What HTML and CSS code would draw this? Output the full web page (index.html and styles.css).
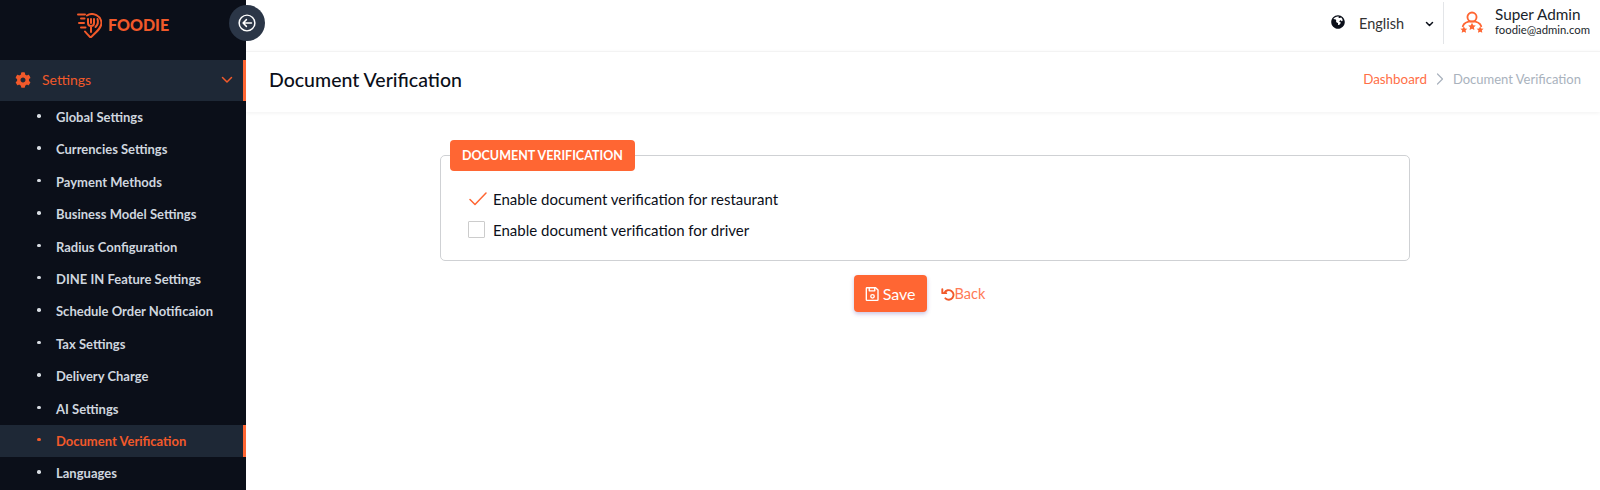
FILE: index.html
```html
<!DOCTYPE html>
<html lang="en">
<head>
    <meta charset="UTF-8">
    <meta name="viewport" content="width=device-width, initial-scale=1.0">
    <title>Document Verification</title>
    <link rel="stylesheet" href="styles.css">
</head>
<body>
    <div class="app">
        <!-- Sidebar -->
        <aside class="sidebar">
            <div class="brand">
                <svg class="brand-icon" viewBox="0 0 25 25" fill="none" stroke="#f1592a" stroke-width="2" stroke-linecap="round" stroke-linejoin="round">
                    <path d="M1 1.500h7M4 5.500h3.500M2 10h5M4 14.500h4.500"/>
                    <path d="M10 2.500A9.500 9.500 0 0 1 24.500 10c0 5-5 9-11 14.500-2-2-4-4-5.500-6"/>
                    <path d="M11 6v4c0 2 1 3 3 3v6M17 6v4c0 2-1 3-3 3M14 6v4"/>
                    <path d="M20.500 6c1 3 0 6-2 8"/>
                </svg>
                <span class="brand-name">FOODIE</span>
            </div>
            <button class="collapse-btn" aria-label="Collapse">
                <svg viewBox="0 0 16 16" fill="none" stroke="#fff" stroke-width="1.300" stroke-linecap="round" stroke-linejoin="round">
                    <circle cx="8" cy="8" r="7"/>
                    <path d="M12 8H4.500M7.500 5L4.500 8l3 3"/>
                </svg>
            </button>
            <nav class="menu">
                <div class="menu-parent">
                    <svg class="gear" viewBox="0 0 512 512" fill="#f1592a"><path d="M487 316l-42-25c4-23 4-47 0-70l42-25c5-3 7-9 5-14-11-35-30-67-54-93-4-4-10-5-15-2l-42 24c-18-15-38-27-60-35V28c0-6-4-11-9-12-37-8-74-8-109 0-6 1-10 6-10 12v48c-22 8-42 20-60 35L91 87c-5-3-11-2-15 2-24 26-43 58-54 93-2 5 0 11 5 14l42 25c-4 23-4 47 0 70l-42 25c-5 3-7 9-5 14 11 35 30 67 54 93 4 4 10 5 15 2l42-24c18 15 38 27 60 35v48c0 6 4 11 10 12 37 8 74 8 109 0 5-1 9-6 9-12v-48c22-8 42-20 60-35l42 24c5 3 11 2 15-2 24-26 43-58 54-93 2-5 0-11-5-14zM256 336c-44 0-80-36-80-80s36-80 80-80 80 36 80 80-36 80-80 80z"/></svg>
                    <span class="menu-label">Settings</span>
                    <svg class="chev" viewBox="0 0 12 8" fill="none" stroke="#f1592a" stroke-width="1.500" stroke-linecap="round" stroke-linejoin="round"><path d="M1.500 1.500L6 6l4.500-4.500"/></svg>
                </div>
                <ul class="submenu">
                    <li>Global Settings</li>
                    <li>Currencies Settings</li>
                    <li>Payment Methods</li>
                    <li>Business Model Settings</li>
                    <li>Radius Configuration</li>
                    <li>DINE IN Feature Settings</li>
                    <li>Schedule Order Notificaion</li>
                    <li>Tax Settings</li>
                    <li>Delivery Charge</li>
                    <li>AI Settings</li>
                    <li class="active">Document Verification</li>
                    <li>Languages</li>
                </ul>
            </nav>
        </aside>

        <div class="main">
            <!-- Top bar -->
            <header class="topbar">
                <svg class="globe" viewBox="0 0 512 512" fill="#0b0f19"><path d="M256 8C119 8 8 119 8 256s111 248 248 248 248-111 248-248S393 8 256 8zm160 215c-12 5-26 1-36-8l-24-20c-8-7-20-5-26 4l-22 33c-6 9-2 21 8 25l28 11c12 5 16 20 8 30l-46 58c-6 8-16 13-26 13h-6c-14 0-24-13-21-27l6-28c2-8-2-16-9-20l-39-22c-20-11-30-34-25-56l3-14c3-13-3-26-15-33L86 150C122 94 185 56 256 56c11 0 22 1 32 3l-12 18c-6 9-2 21 8 25l26 9c14 5 29 1 39-10l14-15c32 25 55 60 63 101z"/></svg>
                <span class="lang">English</span>
                <svg class="lang-chev" viewBox="0 0 12 8" fill="none" stroke="#0b0f19" stroke-width="2" stroke-linecap="round" stroke-linejoin="round"><path d="M2 2l4 4 4-4"/></svg>
                <div class="user">
                    <svg class="user-icon" viewBox="0 0 24 24" fill="none" stroke="#ff6633" stroke-width="1.700" stroke-linecap="round" stroke-linejoin="round">
                        <circle cx="12" cy="6.500" r="4.200"/>
                        <path d="M3.500 15c1-3 4-4.500 8.500-4.500s7.500 1.500 8.500 4.500"/>
                        <path fill="#ff6633" stroke="none" d="M12 11.800l1.100 2.200 2.400.3-1.700 1.700.4 2.400-2.200-1.100-2.200 1.100.4-2.400-1.700-1.700 2.400-.3zM4.500 15l1 2 2.200.3-1.600 1.500.4 2.200-2-1-2 1 .4-2.200-1.600-1.500 2.200-.3zM19.500 15l1 2 2.200.3-1.600 1.500.4 2.200-2-1-2 1 .4-2.200-1.600-1.500 2.200-.3z"/>
                    </svg>
                    <div class="user-info">
                        <div class="user-name">Super Admin</div>
                        <div class="user-mail">foodie@admin.com</div>
                    </div>
                </div>
            </header>

            <!-- Page title -->
            <div class="page-head">
                <h1>Document Verification</h1>
                <div class="crumbs">
                    <span class="crumb-link">Dashboard</span>
                    <svg class="crumb-sep" viewBox="0 0 8 12" fill="none" stroke="#a9b2bd" stroke-width="1.200" stroke-linecap="round" stroke-linejoin="round"><path d="M1.500 1L6.500 6l-5 5"/></svg>
                    <span class="crumb-current">Document Verification</span>
                </div>
            </div>

            <!-- Form -->
            <div class="content">
                <fieldset class="card">
                    <legend>DOCUMENT VERIFICATION</legend>
                    <label class="check-row">
                        <svg class="tick" viewBox="0 0 18 14" fill="none" stroke="#ff6633" stroke-width="1.500" stroke-linecap="round" stroke-linejoin="round"><path d="M1 7.500L6 12.500 17 1"/></svg>
                        <span>Enable document verification for restaurant</span>
                    </label>
                    <label class="check-row">
                        <span class="box"></span>
                        <span>Enable document verification for driver</span>
                    </label>
                </fieldset>
                <div class="actions">
                    <button class="save-btn">
                        <svg viewBox="0 0 448 512" fill="none" stroke="#fff" stroke-width="44" stroke-linejoin="round"><path d="M48 54h276l76 76v306a22 22 0 0 1-22 22H48a22 22 0 0 1-22-22V76a22 22 0 0 1 22-22z"/><path d="M120 54v100h176V54"/><circle cx="224" cy="330" r="56"/></svg>
                        Save
                    </button>
                    <span class="back-link">
                        <svg viewBox="0 0 16 16" fill="none" stroke="#f1592a" stroke-width="2.200" stroke-linecap="round" stroke-linejoin="round"><path d="M4 6.500A5.500 5.500 0 1 1 5 13"/><path d="M1.500 2.500v4.500H6"/></svg>
                        Back
                    </span>
                </div>
            </div>
        </div>
    </div>
</body>
</html>
```

FILE: styles.css
```css
/* General Styles */
body {
    margin: 0;
    font-family: "Lato", "Liberation Sans", sans-serif;
    color: #0b0f19;
    background: #fff;
}

.app {
    display: flex;
    height: 490px;
    overflow: hidden;
}

/* Sidebar */
.sidebar {
    position: relative;
    width: 246px;
    flex-shrink: 0;
    background: #0b0f19;
}

.brand {
    height: 60px;
    padding: 13px 0 0 77px;
    box-sizing: border-box;
    display: flex;
    align-items: flex-start;
    gap: 6px;
}

.brand-icon {
    width: 25px;
    height: 25px;
}

.brand-name {
    color: #f1592a;
    font-size: 16px;
    font-weight: 900;
    line-height: 24px;
}

.collapse-btn {
    position: absolute;
    top: 5px;
    left: 229px;
    width: 36px;
    height: 36px;
    padding: 9px;
    border: none;
    border-radius: 50%;
    background: #2b3647;
    z-index: 5;
}

.collapse-btn svg {
    display: block;
    width: 18px;
    height: 18px;
}

.menu-parent {
    display: flex;
    align-items: center;
    height: 41px;
    padding: 0 10px 2px 15px;
    box-sizing: border-box;
    background: #1e2836;
    border-right: 3px solid #ff6633;
    color: #f1592a;
    font-size: 14px;
}

.gear {
    width: 16px;
    height: 16px;
    margin-right: 11px;
}

.menu-label {
    flex: 1;
}

.chev {
    width: 12px;
    height: 8px;
}

.submenu {
    list-style: none;
    margin: 0;
    padding: 0;
}

.submenu li {
    position: relative;
    height: 32.400px;
    line-height: 32.400px;
    padding-left: 56px;
    color: #cfd6df;
    font-size: 13px;
    font-weight: 700;
}

.submenu li::before {
    content: "";
    position: absolute;
    left: 37px;
    top: 13px;
    width: 3.500px;
    height: 3.500px;
    border-radius: 50%;
    background: #d8dde3;
}

.submenu li.active {
    background: #1e2836;
    border-right: 3px solid #ff6633;
    color: #f1592a;
}

.submenu li.active::before {
    background: #f1592a;
}

/* Top bar */
.main {
    flex: 1;
    min-width: 0;
}

.topbar {
    display: flex;
    align-items: center;
    justify-content: flex-end;
    height: 51px;
    padding: 0 10px 4px 0;
    box-sizing: border-box;
}

.globe {
    flex-shrink: 0;
    width: 14px;
    height: 14px;
    margin-top: -3px;
}

.lang {
    margin-left: 14px;
    font-size: 14.500px;
    color: #333;
}

.lang-chev {
    flex-shrink: 0;
    width: 9px;
    height: 6px;
    margin-left: 21px;
}

.user {
    display: flex;
    align-items: center;
    height: 42px;
    margin: -1px 0 0 9px;
    padding-left: 15px;
    border-left: 1px solid #e3e5e8;
}

.user-icon {
    width: 26px;
    height: 26px;
    margin-right: 10px;
}

.user-info {
    margin-bottom: 5px;
}

.user-name {
    font-size: 15.300px;
    line-height: 18px;
    color: #1a1f2b;
}

.user-mail {
    font-size: 11.300px;
    line-height: 13px;
    color: #1a1f2b;
}

/* Page title */
.page-head {
    display: flex;
    align-items: center;
    justify-content: space-between;
    height: 61px;
    padding: 0 19px 6px 23px;
    box-shadow: 0 1px 4px rgba(0, 0, 0, 0.06);
    border-top: 1px solid #f3f3f3;
    box-sizing: border-box;
}

h1 {
    margin: 0;
    font-size: 19.500px;
    font-weight: 500;
    color: #0b0f19;
}

.crumbs {
    display: flex;
    align-items: center;
    font-size: 13px;
}

.crumb-link {
    font-size: 13.400px;
    color: #ff6f47;
}

.crumb-sep {
    width: 8px;
    height: 12px;
    margin: 0 9px;
}

.crumb-current {
    color: #a9b2bd;
}

/* Form */
.content {
    padding: 0 190px 0 194px;
}

.card {
    height: 121px;
    margin: 28px 0 0;
    padding: 0 0 0 28px;
    box-sizing: border-box;
    border: 1px solid #cfd1d4;
    border-radius: 5px;
}

legend {
    margin-left: -19px;
    padding: 0 12px;
    height: 31px;
    line-height: 31px;
    box-sizing: border-box;
    background: #ff6633;
    border-radius: 4px;
    color: #fff;
    font-size: 12.500px;
    font-weight: 700;
}

.check-row {
    display: flex;
    align-items: center;
    height: 31px;
    gap: 6px;
    font-size: 15px;
    color: #0b0f19;
}

.check-row:first-of-type {
    margin-top: 12px;
}

.tick {
    width: 18px;
    height: 14px;
}

.box {
    width: 15px;
    height: 15px;
    margin: 0 2px 0 -1px;
    border: 1px solid #ccc;
    border-radius: 1px;
}

.actions {
    display: flex;
    align-items: center;
    justify-content: center;
    gap: 14px;
    margin-top: 14px;
    padding-right: 11px;
}

.save-btn {
    display: flex;
    align-items: center;
    gap: 3px;
    height: 37px;
    padding: 0 11px;
    border: none;
    border-radius: 4px;
    background: #ff6633;
    box-shadow: 0 2px 4px rgba(80, 60, 160, 0.3);
    color: #fff;
    font-family: inherit;
    font-size: 16px;
}

.save-btn svg {
    width: 15px;
    height: 16px;
}

.back-link {
    display: flex;
    align-items: center;
    color: #ff7a55;
    font-size: 14.500px;
}

.back-link svg {
    width: 14px;
    height: 14px;
}
```
